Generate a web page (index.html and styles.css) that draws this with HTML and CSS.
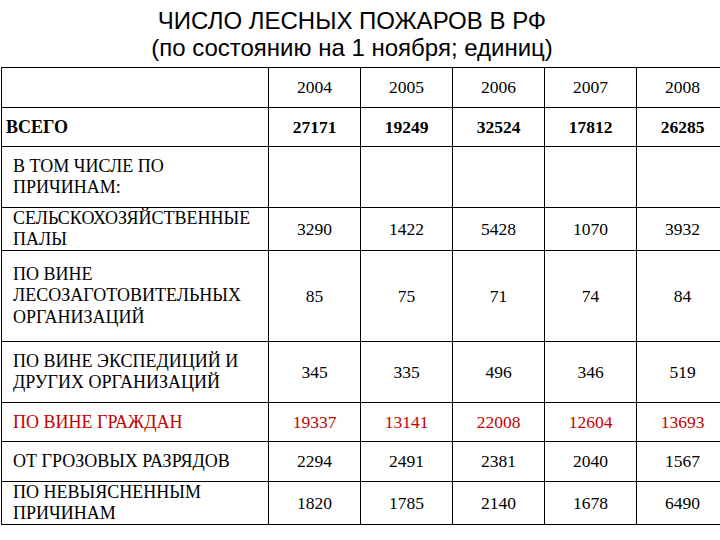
FILE: index.html
```html
<!DOCTYPE html>
<html lang="ru">
<head>
<meta charset="utf-8">
<link rel="stylesheet" href="styles.css">
</head>
<body>
<div class="page">
  <div class="title">
    <div class="t1">ЧИСЛО ЛЕСНЫХ ПОЖАРОВ В РФ</div>
    <div class="t2">(по состоянию на 1 ноября; единиц)</div>
  </div>
  <table class="data">
    <colgroup>
      <col class="c-label"><col class="c-num"><col class="c-num"><col class="c-num"><col class="c-num"><col class="c-num">
    </colgroup>
    <tr class="r-head">
      <td class="label"></td><td>2004</td><td>2005</td><td>2006</td><td>2007</td><td>2008</td>
    </tr>
    <tr class="r-total">
      <td class="label total">ВСЕГО</td><td>27171</td><td>19249</td><td>32524</td><td>17812</td><td>26285</td>
    </tr>
    <tr class="r-sub">
      <td class="label">В ТОМ ЧИСЛЕ ПО<br>ПРИЧИНАМ:</td><td></td><td></td><td></td><td></td><td></td>
    </tr>
    <tr class="r-agri">
      <td class="label">СЕЛЬСКОХОЗЯЙСТВЕННЫЕ<br>ПАЛЫ</td><td>3290</td><td>1422</td><td>5428</td><td>1070</td><td>3932</td>
    </tr>
    <tr class="r-forest">
      <td class="label">ПО ВИНЕ<br>ЛЕСОЗАГОТОВИТЕЛЬНЫХ<br>ОРГАНИЗАЦИЙ</td><td>85</td><td>75</td><td>71</td><td>74</td><td>84</td>
    </tr>
    <tr class="r-exp">
      <td class="label">ПО ВИНЕ ЭКСПЕДИЦИЙ И<br>ДРУГИХ ОРГАНИЗАЦИЙ</td><td>345</td><td>335</td><td>496</td><td>346</td><td>519</td>
    </tr>
    <tr class="r-citizens">
      <td class="label">ПО ВИНЕ ГРАЖДАН</td><td>19337</td><td>13141</td><td>22008</td><td>12604</td><td>13693</td>
    </tr>
    <tr class="r-storm">
      <td class="label">ОТ ГРОЗОВЫХ РАЗРЯДОВ</td><td>2294</td><td>2491</td><td>2381</td><td>2040</td><td>1567</td>
    </tr>
    <tr class="r-unknown">
      <td class="label">ПО НЕВЫЯСНЕННЫМ<br>ПРИЧИНАМ</td><td>1820</td><td>1785</td><td>2140</td><td>1678</td><td>6490</td>
    </tr>
  </table>
</div>
</body>
</html>
```
FILE: styles.css
```css
html, body {
  margin: 0;
  padding: 0;
  background: #fff;
  overflow: hidden;
}
.page {
  width: 720px;
  height: 540px;
  overflow: hidden;
}
.title {
  font-family: "Liberation Sans", Arial, sans-serif;
  font-size: 24px;
  line-height: 27px;
  color: #000;
  text-align: center;
  width: 704px;
  padding-top: 7px;
  height: 67px;
  box-sizing: border-box;
}
.data {
  border-collapse: collapse;
  table-layout: fixed;
  width: 728px;
  margin-left: 1px;
}
.c-label { width: 267px; }
.c-num { width: 92px; }
.data td {
  font-family: "Liberation Serif", "Times New Roman", Tinos, "DejaVu Serif", serif;
  font-size: 17.5px;
  line-height: 21px;
  color: #000;
  border: 1px solid #000;
  text-align: center;
  vertical-align: middle;
  padding: 0;
}
.data td.label {
  font-size: 18px;
  line-height: 21px;
  text-align: left;
  padding-left: 11px;
}
.r-forest td.label { line-height: 21.5px; }
.data td.total {
  padding-left: 4px;
}
.r-total td { font-weight: bold; }
.r-citizens td { color: #c40000; }
.r-head td { height: 39px; }
.r-total td { height: 38px; }
.r-sub td { height: 60px; }
.r-agri td { height: 42px; }
.r-forest td { height: 90px; }
.r-exp td { height: 60px; }
.r-citizens td { height: 38px; }
.r-storm td { height: 39px; }
.r-unknown td { height: 42px; }
```
